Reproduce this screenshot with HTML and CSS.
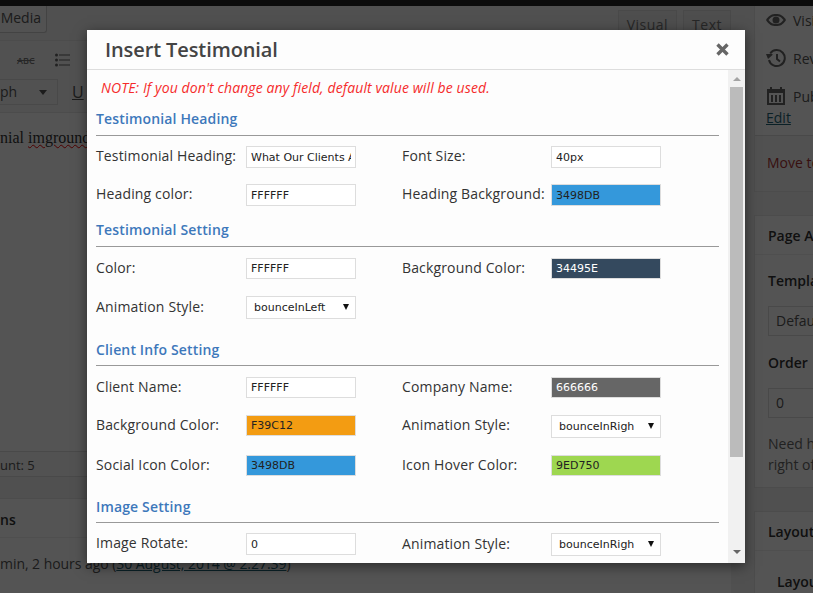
FILE: index.html
```html
<!DOCTYPE html>
<html lang="en">
<head>
    <meta charset="UTF-8">
    <meta name="viewport" content="width=device-width, initial-scale=1.0">
    <title>Insert Testimonial</title>
    <link rel="stylesheet" href="styles.css">
</head>
<body>

    <div class="admin-bar"></div>

    <!-- page behind the popup -->
    <div class="page">
        <div class="main">
            <div class="editor-top">
                <span class="media-btn">Media</span>
                <div class="tabs">
                    <span class="tab">Visual</span>
                    <span class="tab">Text</span>
                </div>
            </div>
            <div class="editor">
                <div class="toolbar">
                    <span class="abc">ABC</span>
                    <svg class="list-icon" width="15" height="14" viewBox="0 0 15 14">
                        <circle cx="1.500" cy="2" r="1.500"/>
                        <circle cx="1.500" cy="7" r="1.500"/>
                        <circle cx="1.500" cy="12" r="1.500"/>
                        <path d="M4 1.500h11v1H4zM4 6.500h11v1H4zM4 11.500h11v1H4z"/>
                    </svg>
                </div>
                <div class="toolbar toolbar-second">
                    <span class="format-select">ph<i class="arrow"></i></span>
                    <span class="underline-btn">U</span>
                </div>
                <div class="editor-text">nial <span class="misspelled">imground</span></div>
            </div>
            <div class="status-line">unt: 5</div>
            <div class="status-end"></div>
            <div class="revisions">
                <h3 class="revisions-title">ns</h3>
                <p class="revisions-text">min, 2 hours ago (<a href="#">30 August, 2014 @ 2:27:39</a>)</p>
            </div>
        </div>

        <div class="sidebar">
            <div class="box box-publish">
                <div class="pub-row">
                    <svg width="20" height="20" viewBox="0 0 20 20">
                        <path d="M0 10C3 5 6 4 10 4s7 1 10 6c-3 5-6 6-10 6S3 15 0 10z" fill="#666"/>
                        <path d="M2.500 10C5 6.700 7 6 10 6s5 .7 7.500 4C15 13.300 13 14 10 14s-5-.7-7.500-4z" fill="#fff"/>
                        <circle cx="10" cy="10" r="3.500" fill="#666"/>
                    </svg>
                    <span>Visibility</span>
                </div>
                <div class="pub-row">
                    <svg width="20" height="20" viewBox="0 0 20 20">
                        <path d="M4.200 5.500A8 8 0 1 1 3 12" fill="none" stroke="#666" stroke-width="2"/>
                        <path d="M0 6h6.500v1L2 11z" fill="#666"/>
                        <path d="M11 6v5l3 2.500" fill="none" stroke="#666" stroke-width="2"/>
                    </svg>
                    <span>Revisions</span>
                </div>
                <div class="pub-row">
                    <svg width="20" height="20" viewBox="0 0 20 20">
                        <path d="M1 3h3V1h2v2h8V1h2v2h3v16H1z" fill="#666"/>
                        <path d="M3 7h14v10H3z" fill="#fff"/>
                        <path d="M5 9h2v7H5zM9 9h2v7H9zM13 9h2v7h-2z" fill="#666"/>
                    </svg>
                    <span>Publish</span>
                </div>
                <a class="edit-link" href="#">Edit</a>
                <div class="box-foot"><span class="trash">Move to Trash</span></div>
            </div>
            <div class="box box-attrs">
                <h3 class="box-title">Page Attributes</h3>
                <div class="box-inner">
                    <strong>Template</strong>
                    <span class="fake-field field-template">Default</span>
                    <strong class="order-label">Order</strong>
                    <span class="fake-field field-order">0</span>
                    <p class="help">Need help?<br>right of</p>
                </div>
            </div>
            <div class="box">
                <h3 class="box-title">Layout</h3>
                <div class="box-inner layout-inner"><strong>Layout</strong></div>
            </div>
        </div>
    </div>

    <div class="overlay"></div>

    <div class="modal">
        <div class="modal-header">
            <h2 class="modal-title">Insert Testimonial</h2>
            <svg class="modal-close" width="13" height="13" viewBox="0 0 13 13">
                <path d="M1.500 1.500l10 10M11.500 1.500l-10 10" stroke="#666" stroke-width="3.400" fill="none"/>
            </svg>
        </div>
        <div class="modal-body">
            <div class="modal-content">
                <p class="note">NOTE: If you don't change any field, default value will be used.</p>

                <section class="group group-first">
                    <h4 class="group-title">Testimonial Heading</h4>
                    <div class="rows">
                        <div class="row">
                            <div class="field"><label>Testimonial Heading:</label><input class="txt" type="text" value="What Our Clients Are Saying"></div>
                            <div class="field field-right"><label>Font Size:</label><input class="txt" type="text" value="40px"></div>
                        </div>
                        <div class="row">
                            <div class="field"><label>Heading color:</label><input class="txt" type="text" value="FFFFFF"></div>
                            <div class="field field-right"><label>Heading Background:</label><input class="txt c-blue" type="text" value="3498DB"></div>
                        </div>
                    </div>
                </section>

                <section class="group group-open">
                    <h4 class="group-title">Testimonial Setting</h4>
                    <div class="rows">
                        <div class="row">
                            <div class="field"><label>Color:</label><input class="txt color" type="text" value="FFFFFF"></div>
                            <div class="field field-right"><label>Background Color:</label><input class="txt color c-navy" type="text" value="34495E"></div>
                        </div>
                        <div class="row">
                            <div class="field"><label class="label-low">Animation Style:</label><span class="select-wrap"><select><option>bounceInLeft</option></select></span></div>
                        </div>
                    </div>
                </section>

                <section class="group group-open">
                    <h4 class="group-title title-low">Client Info Setting</h4>
                    <div class="rows">
                        <div class="row">
                            <div class="field"><label>Client Name:</label><input class="txt color" type="text" value="FFFFFF"></div>
                            <div class="field field-right"><label>Company Name:</label><input class="txt color c-gray" type="text" value="666666"></div>
                        </div>
                        <div class="row">
                            <div class="field"><label>Background Color:</label><input class="txt color c-orange" type="text" value="F39C12"></div>
                            <div class="field field-right"><label>Animation Style:</label><span class="select-wrap"><select><option>bounceInRight</option></select></span></div>
                        </div>
                        <div class="row">
                            <div class="field"><label>Social Icon Color:</label><input class="txt color c-blue" type="text" value="3498DB"></div>
                            <div class="field field-right"><label>Icon Hover Color:</label><input class="txt color c-green" type="text" value="9ED750"></div>
                        </div>
                    </div>
                </section>

                <section class="group">
                    <h4 class="group-title title-low">Image Setting</h4>
                    <div class="rows">
                        <div class="row">
                            <div class="field"><label>Image Rotate:</label><input class="txt" type="text" value="0"></div>
                            <div class="field field-right"><label class="label-low">Animation Style:</label><span class="select-wrap"><select><option>bounceInRight</option></select></span></div>
                        </div>
                    </div>
                </section>
            </div>
            <div class="scrollbar">
                <i class="scroll-up"></i>
                <div class="scroll-thumb"></div>
                <i class="scroll-down"></i>
            </div>
        </div>
    </div>

</body>
</html>
```

FILE: styles.css
```css
html, body {
    margin: 0;
    padding: 0;
    height: 100%;
}

body {
    position: relative;
    width: 813px;
    height: 593px;
    overflow: hidden;
    font-family: 'Open Sans', sans-serif;
    font-size: 14px;
    color: #555;
    background-color: #f1f1f1;
}

.admin-bar {
    position: relative;
    z-index: 1;
    height: 6px;
    background-color: #222;
}

/* page behind the popup */
.page {
    display: flex;
}

.main {
    width: 731px;
    flex-shrink: 0;
}

.editor-top {
    height: 34px;
    display: flex;
    justify-content: space-between;
}

.media-btn {
    width: 48px;
    height: 27px;
    margin-left: -1px;
    border: 1px solid #ccc;
    border-top: none;
    border-radius: 0 0 3px 0;
    box-sizing: border-box;
    font-size: 14px;
    line-height: 24px;
    text-align: right;
    padding-right: 5px;
    color: #555;
    background-color: #f7f7f7;
}

.tabs {
    display: flex;
    gap: 6px;
    padding-top: 4px;
}

.tab {
    height: 30px;
    padding: 0 8px;
    box-sizing: border-box;
    border: 1px solid #ddd;
    border-bottom: none;
    line-height: 27px;
    letter-spacing: 0.5px;
    background-color: #ebebeb;
    color: #777;
}

.editor {
    height: 411px;
    background-color: #fff;
    border-top: 1px solid #e5e5e5;
    box-sizing: border-box;
}

.toolbar {
    height: 38px;
    display: flex;
    align-items: center;
    background-color: #f5f5f5;
}

.abc {
    margin-left: 17px;
    font-size: 9px;
    font-weight: 600;
    text-decoration: line-through;
    color: #777;
}

.list-icon {
    margin-left: 20px;
    fill: #666;
}

.toolbar-second {
    height: 33px;
    border-bottom: 1px solid #e5e5e5;
    align-items: flex-start;
}

.format-select {
    width: 58px;
    height: 26px;
    border: 1px solid #ddd;
    border-left: none;
    box-sizing: border-box;
    position: relative;
    line-height: 24px;
    font-size: 14px;
    color: #555;
}

.arrow {
    position: absolute;
    right: 10px;
    top: 10px;
    border: 4px solid transparent;
    border-top: 5px solid #555;
    border-bottom: none;
}

.underline-btn {
    margin-left: 14px;
    line-height: 26px;
    font-size: 16px;
    text-decoration: underline;
    color: #555;
}

.editor-text {
    padding-top: 15px;
    font-family: 'Liberation Serif', serif;
    font-size: 16px;
    line-height: 20px;
    color: #333;
}

.misspelled {
    text-decoration: underline wavy #e00;
    text-decoration-thickness: 1px;
}

.status-line {
    height: 26px;
    border-top: 1px solid #ddd;
    border-bottom: 1px solid #ddd;
    box-sizing: border-box;
    background-color: #f7f7f7;
    line-height: 26px;
    font-size: 13px;
    color: #555;
}

.status-end {
    height: 21px;
}

.revisions {
    background-color: #fff;
    border-top: 1px solid #e5e5e5;
    height: 100px;
}

.revisions-title {
    margin: 0;
    height: 39px;
    box-sizing: border-box;
    border-bottom: 1px solid #eee;
    line-height: 41px;
    font-size: 14px;
    font-weight: 600;
    color: #333;
}

.revisions-text {
    margin: 0;
    padding-top: 16px;
    line-height: 20px;
    font-size: 14px;
    letter-spacing: -0.05px;
    color: #555;
}

.revisions-text a,
.edit-link {
    color: #1f6375;
}

.sidebar {
    margin: -8px 0 0 23px;
    width: 300px;
    flex-shrink: 0;
}

.box {
    background-color: #fff;
    border: 1px solid #e5e5e5;
    margin-bottom: 23px;
}

.box-publish {
    padding: 2px 0 0 11px;
}

.pub-row {
    height: 38px;
    display: flex;
    align-items: center;
    gap: 7px;
    font-size: 14px;
    color: #555;
}

.edit-link {
    display: block;
    margin-top: -7px;
    line-height: 20px;
    font-size: 14px;
}

.box-foot {
    margin: 7px 0 0 -11px;
    padding-left: 12px;
    height: 55px;
    border-top: 1px solid #ddd;
    background-color: #f5f5f5;
    line-height: 54px;
}

.trash {
    color: #a33;
}

.box-title {
    margin: 0;
    height: 39px;
    padding-left: 13px;
    box-sizing: border-box;
    border-bottom: 1px solid #eee;
    font-size: 14px;
    font-weight: 600;
    line-height: 39px;
    color: #333;
}

.box-attrs {
    height: 273px;
    box-sizing: border-box;
}

.box-inner {
    padding: 15px 0 0 13px;
    line-height: 22px;
}

.box-inner strong {
    display: block;
    font-weight: 600;
    color: #333;
}

.fake-field {
    display: block;
    width: 120px;
    height: 30px;
    margin-top: 14px;
    padding-left: 7px;
    box-sizing: border-box;
    border: 1px solid #ddd;
    line-height: 28px;
    color: #555;
}

.box-inner .order-label {
    margin-top: 16px;
}

.help {
    margin: 15px 0 0;
    line-height: 21px;
    color: #666;
}

.box-inner.layout-inner {
    padding: 20px 0 0 22px;
}

/* popup */
.overlay {
    position: absolute;
    top: 0;
    right: 0;
    bottom: 0;
    left: 0;
    z-index: 2;
    background-color: rgba(0, 0, 0, 0.67);
}

.modal {
    position: absolute;
    left: 87px;
    top: 30px;
    z-index: 3;
    width: 658px;
    height: 533px;
    display: flex;
    flex-direction: column;
    background-color: #fdfdfd;
    box-shadow: 0 3px 12px rgba(0, 0, 0, 0.5);
}

.modal-header {
    height: 40px;
    flex-shrink: 0;
    box-sizing: border-box;
    display: flex;
    justify-content: space-between;
    align-items: center;
    padding: 0 16px 0 18px;
    border-bottom: 1px solid #ddd;
}

.modal-title {
    margin: 0;
    font-size: 20px;
    font-weight: 600;
    letter-spacing: -0.1px;
    color: #444;
}

.modal-body {
    flex: 1;
    min-height: 0;
    display: flex;
}

.modal-content {
    flex: 1;
    min-width: 0;
    overflow: hidden;
    padding: 8px 9px 0 9px;
}

.note {
    margin: 0 0 11px 5px;
    line-height: 20px;
    font-size: 14px;
    font-style: italic;
    letter-spacing: 0.11px;
    color: #f52b2b;
}

.group {
    margin-bottom: 20px;
}

.group-first {
    margin-bottom: 14px;
}

.group-title {
    margin: 0;
    padding-bottom: 6px;
    border-bottom: 1px solid #999;
    line-height: 20px;
    font-size: 14px;
    font-weight: 600;
    letter-spacing: 0.15px;
    color: #3d78bb;
}

.title-low {
    padding: 1px 0 5px;
}

.rows {
    display: flex;
    flex-direction: column;
    gap: 17px;
    padding-top: 10px;
}

.group-first .rows {
    gap: 16px;
}

.group-open .rows {
    padding-top: 11px;
}

.row {
    display: flex;
    align-items: flex-start;
}

.field {
    width: 306px;
    display: flex;
    align-items: flex-start;
}

.field-right {
    width: 259px;
}

.field label {
    width: 150px;
    flex-shrink: 0;
    line-height: 20px;
    font-size: 14px;
    letter-spacing: 0.15px;
    color: #333;
}

.field-right label {
    width: 149px;
}

.field .label-low {
    padding-top: 1px;
}

.txt {
    width: 110px;
    height: 22px;
    margin: 0;
    padding: 0 4px;
    box-sizing: border-box;
    border: 1px solid #ddd;
    border-radius: 0;
    outline: none;
    background-color: #fff;
    font-family: 'DejaVu Sans', sans-serif;
    font-size: 11px;
    color: #222;
}

.color {
    height: 21px;
}

.c-blue {
    background-color: #3498db;
}

.c-navy {
    background-color: #34495e;
    color: #fff;
}

.c-gray {
    background-color: #666;
    color: #fff;
}

.c-orange {
    background-color: #f39c12;
}

.c-green {
    background-color: #9ed750;
}

.select-wrap {
    position: relative;
    display: block;
    width: 110px;
    height: 23px;
}

.select-wrap::after {
    content: "";
    position: absolute;
    right: 7px;
    top: 8px;
    border: 3px solid transparent;
    border-top: 6px solid #111;
    border-bottom: none;
}

.select-wrap select {
    display: block;
    width: 110px;
    height: 23px;
    margin: 0;
    padding: 0 26px 0 7px;
    box-sizing: border-box;
    border: 1px solid #ddd;
    border-radius: 0;
    outline: none;
    appearance: none;
    background-color: #fff;
    font-family: 'DejaVu Sans', sans-serif;
    font-size: 11px;
    color: #222;
}

.scrollbar {
    width: 17px;
    flex-shrink: 0;
    display: flex;
    flex-direction: column;
    align-items: center;
    background-color: #f1f1f1;
}

.scroll-up {
    margin-top: 7px;
    border: 4px solid transparent;
    border-top: none;
    border-bottom: 4px solid #a3a3a3;
}

.scroll-thumb {
    width: 13px;
    height: 370px;
    margin-top: 6px;
    background-color: #bbb;
}

.scroll-down {
    margin-top: 93px;
    border: 4px solid transparent;
    border-bottom: none;
    border-top: 4px solid #666;
}
```
